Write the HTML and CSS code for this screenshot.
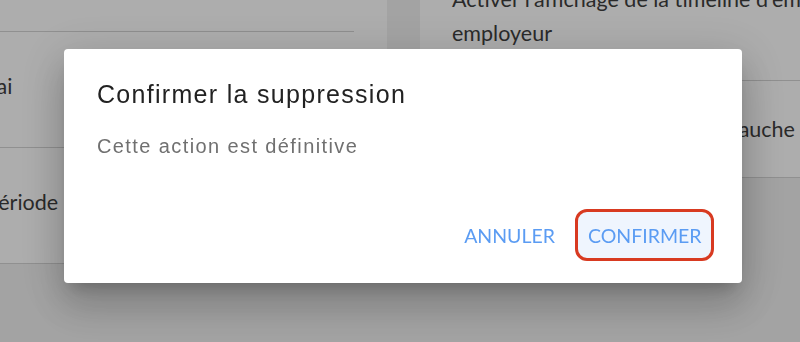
FILE: index.html
```html
<!DOCTYPE html>
<html lang="fr">
<head>
  <meta charset="UTF-8">
  <meta name="viewport" content="width=device-width, initial-scale=1">
  <title>Paramètres | Confirmer la suppression</title>
  <link rel="stylesheet" href="styles.css">
</head>
<body>
  <!-- Settings behind the dialog -->
  <div class="settings">
    <div class="card card-left">
      <div class="row row-head"></div>
      <div class="row row-setting">
        <span class="label">Activer la période d'essai</span>
      </div>
      <div class="row row-setting">
        <span class="label">Afficher le solde de la période</span>
      </div>
    </div>

    <div class="card card-right">
      <div class="row row-double">
        <span class="label">Activer l'affichage de la timeline d'embauche côté<br>employeur</span>
      </div>
      <div class="row row-single">
        <span class="label">Afficher le menu utilisateur à gauche au démarrage</span>
      </div>
    </div>
  </div>

  <!-- Confirmation dialog -->
  <div class="overlay">
    <div class="dialog">
      <h2 class="dialog-title">Confirmer la suppression</h2>
      <p class="dialog-text">Cette action est définitive</p>
      <div class="dialog-actions">
        <button class="btn">Annuler</button>
        <button class="btn btn-focus">Confirmer</button>
      </div>
    </div>
  </div>
</body>
</html>
```

FILE: styles.css
```css
/* Global Styles */
* {
  box-sizing: border-box;
  margin: 0;
  padding: 0;
}
body {
  font-family: Lato, 'Noto Sans', sans-serif;
  color: #3e3e3e;
  background: #f1f1f1;
  height: 342px;
  overflow: hidden;
}
/* Settings page */
.settings {
  display: flex;
  align-items: flex-start;
  gap: 33px;
  margin-left: -253px;
}
.card {
  background: #fff;
  flex-shrink: 0;
}
.card-left {
  width: 640px;
}
.card-right {
  width: 640px;
  margin-top: -48px;
}
.row {
  border-bottom: 1px solid #d4d4d4;
  font-size: 21.5px;
  line-height: 34px;
}
.row-head {
  height: 32px;
  margin-right: 33px;
}
.row-setting {
  height: 116px;
  padding: 37px 32px 0;
  white-space: nowrap;
}
.row-double {
  padding: 30px 32px;
  white-space: nowrap;
}
.row-single {
  height: 97px;
  padding: 31px 32px 0;
  white-space: nowrap;
}
/* Dialog */
.overlay {
  position: fixed;
  inset: 0;
  background: rgba(0, 0, 0, 0.32);
  display: flex;
  align-items: center;
  justify-content: center;
  padding: 0 0 10px 6px;
}
.dialog {
  width: 678px;
  height: 234px;
  background: #fff;
  border-radius: 4px;
  padding: 29px 28px 22px 33px;
  display: flex;
  flex-direction: column;
  box-shadow: 0 11px 15px -7px rgba(0, 0, 0, 0.2),
              0 24px 38px 3px rgba(0, 0, 0, 0.14),
              0 9px 46px 8px rgba(0, 0, 0, 0.12);
}
.dialog-title {
  font-family: 'Liberation Sans', Arial, sans-serif;
  font-weight: normal;
  font-size: 25px;
  line-height: 32px;
  letter-spacing: 1.3px;
  color: #222;
  margin-bottom: 22px;
}
.dialog-text {
  font-family: 'Liberation Sans', Arial, sans-serif;
  font-size: 20px;
  line-height: 28px;
  letter-spacing: 1.4px;
  color: #707070;
}
.dialog-actions {
  margin-top: auto;
  display: flex;
  justify-content: flex-end;
  gap: 8px;
}
.btn {
  height: 52px;
  padding: 0 9.5px;
  border: 3px solid transparent;
  border-radius: 12px;
  background: transparent;
  font-family: Lato, sans-serif;
  font-size: 19.5px;
  text-transform: uppercase;
  color: #5b9cf3;
  cursor: pointer;
}
.btn-focus {
  border-color: #d83a21;
  background: #eff5fe;
}
```
